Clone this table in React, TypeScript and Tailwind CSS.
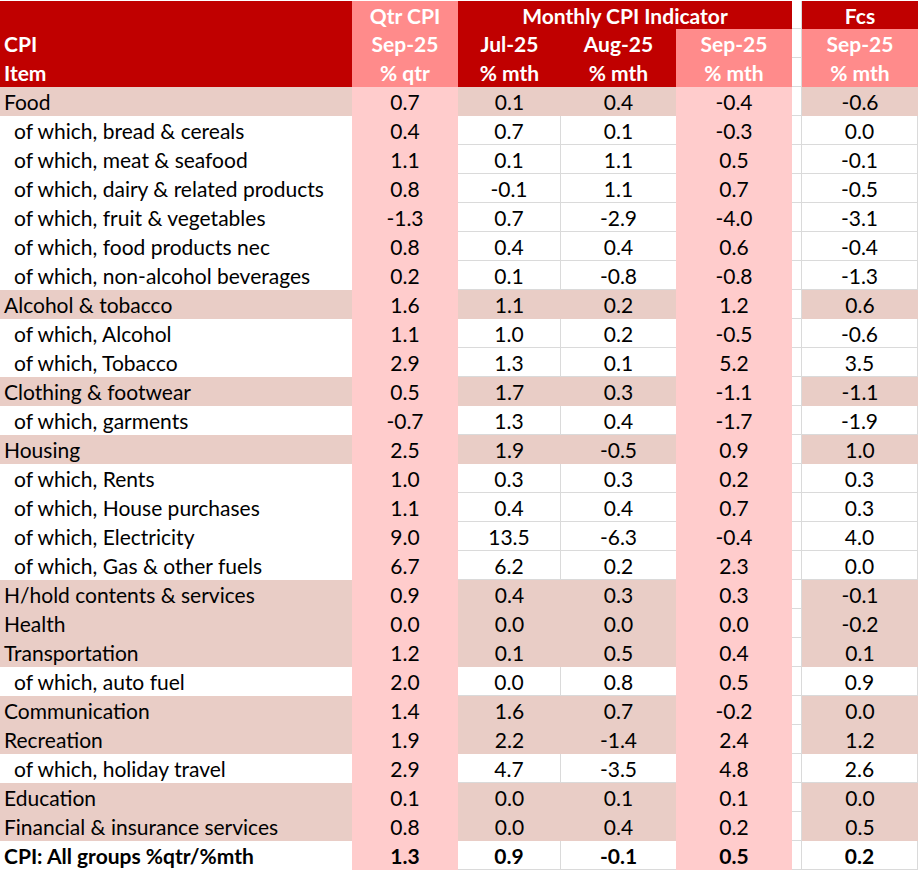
import React from "react";

type Row = { label: string; kind: "cat" | "sub" | "total"; v: string[] };

const rows: Row[] = [
  { label: "Food", kind: "cat", v: ["0.7", "0.1", "0.4", "-0.4", "-0.6"] },
  { label: "of which, bread & cereals", kind: "sub", v: ["0.4", "0.7", "0.1", "-0.3", "0.0"] },
  { label: "of which, meat & seafood", kind: "sub", v: ["1.1", "0.1", "1.1", "0.5", "-0.1"] },
  { label: "of which, dairy & related products", kind: "sub", v: ["0.8", "-0.1", "1.1", "0.7", "-0.5"] },
  { label: "of which, fruit & vegetables", kind: "sub", v: ["-1.3", "0.7", "-2.9", "-4.0", "-3.1"] },
  { label: "of which, food products nec", kind: "sub", v: ["0.8", "0.4", "0.4", "0.6", "-0.4"] },
  { label: "of which, non-alcohol beverages", kind: "sub", v: ["0.2", "0.1", "-0.8", "-0.8", "-1.3"] },
  { label: "Alcohol & tobacco", kind: "cat", v: ["1.6", "1.1", "0.2", "1.2", "0.6"] },
  { label: "of which, Alcohol", kind: "sub", v: ["1.1", "1.0", "0.2", "-0.5", "-0.6"] },
  { label: "of which, Tobacco", kind: "sub", v: ["2.9", "1.3", "0.1", "5.2", "3.5"] },
  { label: "Clothing & footwear", kind: "cat", v: ["0.5", "1.7", "0.3", "-1.1", "-1.1"] },
  { label: "of which, garments", kind: "sub", v: ["-0.7", "1.3", "0.4", "-1.7", "-1.9"] },
  { label: "Housing", kind: "cat", v: ["2.5", "1.9", "-0.5", "0.9", "1.0"] },
  { label: "of which, Rents", kind: "sub", v: ["1.0", "0.3", "0.3", "0.2", "0.3"] },
  { label: "of which, House purchases", kind: "sub", v: ["1.1", "0.4", "0.4", "0.7", "0.3"] },
  { label: "of which, Electricity", kind: "sub", v: ["9.0", "13.5", "-6.3", "-0.4", "4.0"] },
  { label: "of which, Gas & other fuels", kind: "sub", v: ["6.7", "6.2", "0.2", "2.3", "0.0"] },
  { label: "H/hold contents & services", kind: "cat", v: ["0.9", "0.4", "0.3", "0.3", "-0.1"] },
  { label: "Health", kind: "cat", v: ["0.0", "0.0", "0.0", "0.0", "-0.2"] },
  { label: "Transportation", kind: "cat", v: ["1.2", "0.1", "0.5", "0.4", "0.1"] },
  { label: "of which, auto fuel", kind: "sub", v: ["2.0", "0.0", "0.8", "0.5", "0.9"] },
  { label: "Communication", kind: "cat", v: ["1.4", "1.6", "0.7", "-0.2", "0.0"] },
  { label: "Recreation", kind: "cat", v: ["1.9", "2.2", "-1.4", "2.4", "1.2"] },
  { label: "of which, holiday travel", kind: "sub", v: ["2.9", "4.7", "-3.5", "4.8", "2.6"] },
  { label: "Education", kind: "cat", v: ["0.1", "0.0", "0.1", "0.1", "0.0"] },
  { label: "Financial & insurance services", kind: "cat", v: ["0.8", "0.0", "0.4", "0.2", "0.5"] },
  { label: "CPI: All groups %qtr/%mth", kind: "total", v: ["1.3", "0.9", "-0.1", "0.5", "0.2"] },
];

const cols = "grid grid-cols-[352px_106px_103px_115px_116px_10px_116px]";

function DataRow({ r }: { r: Row }) {
  const cat = r.kind === "cat";
  const bold = r.kind === "total" ? "font-bold" : "";
  const fill = cat ? "bg-[#e9cdc6]" : "bg-white";
  const grid = cat ? "" : "border-b border-[#dadada]";
  const cell = "h-[29px] flex items-center justify-center box-border";
  return (
    <div className={`${cols} ${bold}`}>
      <div className={`h-[29px] flex items-center box-border ${fill} ${r.kind === "sub" ? "pl-[14px]" : "pl-[4px]"}`}>
        {r.label}
      </div>
      <div className={`${cell} bg-[#ffcccc]`}>{r.v[0]}</div>
      <div className={`${cell} ${fill} ${grid} ${cat ? "" : "border-r"}`}>{r.v[1]}</div>
      <div className={`${cell} ${fill} ${grid}`}>{r.v[2]}</div>
      <div className={`${cell} bg-[#ffcccc]`}>{r.v[3]}</div>
      <div className="h-[29px] box-border bg-white border-b border-r border-[#dadada]" />
      <div className={`${cell} ${fill} ${grid} ${cat ? "" : "border-r"}`}>{r.v[4]}</div>
    </div>
  );
}

export default function App() {
  const dark = "bg-[#c00000]";
  const salmon = "bg-[#ff8b8b]";
  const hc = "flex items-center justify-center box-border";
  const gap = "box-border bg-white border-b border-r border-[#dadada]";
  return (
    <div
      className="w-[918px] bg-white pt-px text-[21px] leading-none text-black"
      style={{ fontFamily: "Lato, 'Open Sans', sans-serif" }}
    >
      <div className="font-bold text-white">
        <div className={`${cols} h-[28px]`}>
          <div className={dark} />
          <div className={`${hc} ${salmon}`}>Qtr CPI</div>
          <div className={`${hc} ${dark} col-span-3`}>Monthly CPI Indicator</div>
          <div className={gap} />
          <div className={`${hc} ${dark}`}>Fcs</div>
        </div>
        <div className={`${cols} h-[29px]`}>
          <div className={`flex items-center pl-[4px] ${dark}`}>CPI</div>
          <div className={`${hc} ${salmon}`}>Sep-25</div>
          <div className={`${hc} ${dark}`}>Jul-25</div>
          <div className={`${hc} ${dark}`}>Aug-25</div>
          <div className={`${hc} ${salmon}`}>Sep-25</div>
          <div className={gap} />
          <div className={`${hc} ${salmon}`}>Sep-25</div>
        </div>
        <div className={`${cols} h-[29px]`}>
          <div className={`flex items-center pl-[4px] ${dark}`}>Item</div>
          <div className={`${hc} ${salmon}`}>% qtr</div>
          <div className={`${hc} ${dark}`}>% mth</div>
          <div className={`${hc} ${dark}`}>% mth</div>
          <div className={`${hc} ${salmon}`}>% mth</div>
          <div className={gap} />
          <div className={`${hc} ${salmon}`}>% mth</div>
        </div>
      </div>
      {rows.map((r, i) => (
        <DataRow key={i} r={r} />
      ))}
    </div>
  );
}
